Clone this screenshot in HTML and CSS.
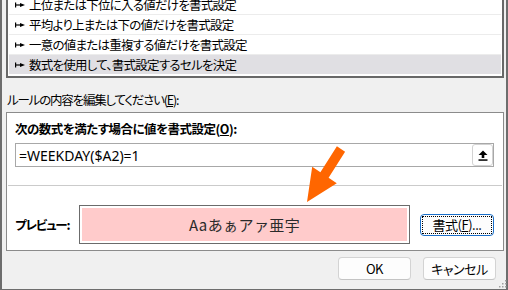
FILE: index.html
```html
<!DOCTYPE html>
<html lang="ja">
<head>
<meta charset="utf-8">
<title>書式ルールの編集</title>
<link rel="stylesheet" href="styles.css">
</head>
<body>
<div class="window">
  <ul class="rule-list">
    <li class="rule"><svg class="bullet" viewBox="0 0 10 8" width="10" height="8"><rect x="0" y="1.5" width="1.2" height="5"/><rect x="0" y="3.4" width="6" height="1.2"/><polygon points="5,2 10,4 5,6"/></svg><span>上位または下位に入る値だけを書式設定</span></li>
    <li class="rule"><svg class="bullet" viewBox="0 0 10 8" width="10" height="8"><rect x="0" y="1.5" width="1.2" height="5"/><rect x="0" y="3.4" width="6" height="1.2"/><polygon points="5,2 10,4 5,6"/></svg><span>平均より上または下の値だけを書式設定</span></li>
    <li class="rule"><svg class="bullet" viewBox="0 0 10 8" width="10" height="8"><rect x="0" y="1.5" width="1.2" height="5"/><rect x="0" y="3.4" width="6" height="1.2"/><polygon points="5,2 10,4 5,6"/></svg><span>一意の値または重複する値だけを書式設定</span></li>
    <li class="rule selected"><svg class="bullet" viewBox="0 0 10 8" width="10" height="8"><rect x="0" y="1.5" width="1.2" height="5"/><rect x="0" y="3.4" width="6" height="1.2"/><polygon points="5,2 10,4 5,6"/></svg><span>数式を使用して、書式設定するセルを決定</span></li>
  </ul>

  <div class="edit-label">ルールの内容を編集してください(<u>E</u>):</div>

  <section class="group">
    <div class="group-top">
      <div class="heading">次の数式を満たす場合に値を書式設定(<u>O</u>):</div>
      <div class="formula">
        <span class="formula-text">=WEEKDAY($A2)=1</span>
        <button class="collapse" type="button" aria-label="折りたたむ"><svg viewBox="0 0 10 11" width="10" height="11"><polygon points="5,0.5 9.5,5 6.3,5 6.3,8 3.7,8 3.7,5 0.5,5"/><rect x="0.5" y="9.3" width="9" height="1.5"/></svg></button>
      </div>
    </div>
    <hr class="sep">
    <div class="preview-row">
      <span class="preview-label">プレビュー:</span>
      <div class="preview"><div class="preview-fill">Aaあぁアァ亜宇</div></div>
      <button class="format-btn" type="button"><span class="focus">書式(<u>F</u>)...</span></button>
    </div>
  </section>

  <div class="actions">
    <button class="btn" type="button">OK</button>
    <button class="btn" type="button">キャンセル</button>
  </div>
</div>

<svg class="callout-arrow" viewBox="0 0 508 290" width="508" height="290">
  <polygon points="336.9,146.2 345.1,151.8 328.6,177.8 336.8,183.3 307,202 312.2,166.7 320.4,172.2"/>
</svg>

<svg class="grip" viewBox="0 0 8 8" width="8" height="8">
  <rect x="6" y="0" width="1.5" height="1.5"/>
  <rect x="3" y="3" width="1.5" height="1.5"/>
  <rect x="6" y="3" width="1.5" height="1.5"/>
  <rect x="0" y="6" width="1.5" height="1.5"/>
  <rect x="3" y="6" width="1.5" height="1.5"/>
  <rect x="6" y="6" width="1.5" height="1.5"/>
</svg>
</body>
</html>
```

FILE: styles.css
```css
* { box-sizing: border-box; }

html, body {
  margin: 0;
  padding: 0;
  background: #f0f0f0;
}

body {
  font-family: "Noto Sans CJK JP", "Noto Sans", sans-serif;
  font-size: 12.5px;
  letter-spacing: -0.75px;
  color: #000;
  font-feature-settings: "palt";
  overflow: hidden;
}

.window {
  width: 508px;
  height: 290px;
  background: #f0f0f0;
  border-left: 2px solid #6d6d6d;
  border-right: 2px solid #6d6d6d;
  border-bottom: 1px solid #6d6d6d;
  overflow: hidden;
}

.rule-list {
  list-style: none;
  margin: -8px 2px 0 4px;
  padding: 1px 1px 2px 1px;
  background: #fff;
  border: 2px solid #686868;
}

.rule {
  display: flex;
  align-items: center;
  height: 20px;
  line-height: 19px;
  padding-left: 6px;
  border-top: 1px solid #ececec;
  white-space: nowrap;
}

.rule:first-child {
  height: 19px;
  border-top: none;
}

.rule.selected {
  background: #e0dfe3;
}

.bullet {
  flex: none;
  fill: #000;
  margin-right: 4px;
}

.edit-label {
  margin: 14px 0 4px 5px;
  line-height: 16px;
  letter-spacing: -1.2px;
}

.group {
  margin: 0 2px 0 4px;
  height: 139px;
  background: #fff;
  border: 1px solid #8b8b8b;
}

.group-top {
  padding: 7px 9px 0 8px;
}

.heading {
  font-weight: bold;
  line-height: 17px;
  letter-spacing: -0.5px;
}

.formula {
  margin-top: 6px;
  height: 24px;
  border: 1px solid #a8a8a8;
  display: flex;
  align-items: center;
  justify-content: space-between;
  padding-left: 3px;
}

.formula-text {
  font-family: "Noto Sans", sans-serif;
  font-size: 14px;
  letter-spacing: 0;
  font-feature-settings: normal;
}

.collapse {
  width: 21px;
  height: 22px;
  padding: 0;
  border: 1px solid #d2d2d2;
  border-radius: 3px;
  background: #fff;
  display: flex;
  align-items: center;
  justify-content: center;
}

.collapse svg { fill: #000; }

.sep {
  border: 0;
  height: 1px;
  margin: 18px 1px 0 1px;
  background: #cbcbcb;
}

.preview-row {
  display: flex;
  align-items: center;
  margin-top: 19px;
  padding-left: 8px;
  height: 39px;
}

.preview-label {
  width: 64px;
  font-weight: bold;
  line-height: 17px;
  letter-spacing: -1.2px;
}

.preview {
  width: 331px;
  height: 39px;
  border: 1px solid #6b6b6b;
  padding: 2px;
  background: #fff;
}

.preview-fill {
  height: 100%;
  background: #ffcbcb;
  display: flex;
  align-items: center;
  justify-content: center;
  font-size: 15px;
  color: #2a2a2a;
  font-feature-settings: normal;
  letter-spacing: 0.4px;
}

.format-btn {
  margin-left: 10px;
  width: 74px;
  height: 22px;
  padding: 1px;
  border: 1px solid #1a6fc9;
  border-radius: 4px;
  background: #fdfdfd;
  font: inherit;
  font-size: 13px;
  letter-spacing: -0.5px;
  color: #000;
}

.format-btn .focus {
  display: flex;
  align-items: center;
  justify-content: center;
  height: 100%;
  border: 1px dotted #000;
  line-height: 16px;
}

.actions {
  display: flex;
  justify-content: flex-end;
  gap: 12px;
  margin-top: 6px;
  padding-right: 10px;
}

.btn {
  width: 73px;
  height: 23px;
  padding: 0;
  border: 1px solid #d3d3d3;
  border-bottom-color: #c4c4c4;
  border-radius: 4px;
  background: #fdfdfd;
  font: inherit;
  font-size: 13px;
  letter-spacing: -0.5px;
  color: #000;
}

.callout-arrow {
  position: fixed;
  left: 0;
  top: 0;
  pointer-events: none;
  fill: #ff6600;
}

.grip {
  position: fixed;
  right: 1px;
  bottom: 2px;
  fill: #a0a0a0;
}
```
